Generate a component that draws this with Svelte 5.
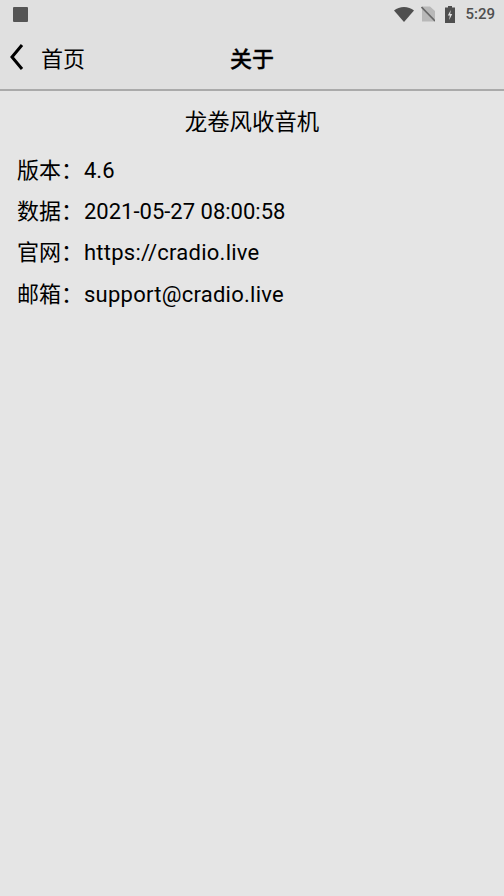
<script>
  const rows = [
    { label: '版本：', value: '4.6' },
    { label: '数据：', value: '2021-05-27 08:00:58' },
    { label: '官网：', value: 'https://cradio.live', wide: true },
    { label: '邮箱：', value: 'support@cradio.live', wide: true }
  ];
</script>

<div class="page" lang="zh-CN">
  <div class="status">
    <div class="notif"></div>
    <div class="right">
      <svg class="wifi" width="20" height="15" viewBox="0 0 20 15"><path d="M0 3.500C2.800 1.200 6.200 0 10 0s7.200 1.200 10 3.500L10 15z" fill="#4f4f4f"/></svg>
      <svg class="sim" width="14" height="16" viewBox="0 0 14 16"><path d="M1 0.500h8L14 5v10.500H1z" fill="#b8b8b8"/><path d="M0.500 1L14 15" stroke="#666" stroke-width="1.600"/></svg>
      <svg class="batt" width="10" height="17" viewBox="0 0 10 17"><path d="M3 0h4v1.500h3V17H0V1.500h3z" fill="#4f4f4f"/><path d="M5.800 4L2.800 9.500h2L4.200 14l3-6h-2z" fill="#e0e0e0"/></svg>
      <span class="time">5:29</span>
    </div>
  </div>
  <header class="nav">
    <div class="back">
      <svg width="16" height="28" viewBox="0 0 16 28"><path d="M14 2L4 14l10 12" fill="none" stroke="#000" stroke-width="3"/></svg>
      <span>首页</span>
    </div>
    <div class="title">关于</div>
  </header>
  <main class="content">
    <div class="app-name">龙卷风收音机</div>
    {#each rows as row}
      <div class="row"><span class="label">{row.label}</span><span class:wide={row.wide}>{row.value}</span></div>
    {/each}
  </main>
</div>

<style>
  :global(body) { margin: 0; background: #e5e5e5; }
  .page {
    width: 504px; height: 896px; overflow: hidden; background: #e5e5e5; color: #000;
    font-family: Roboto, "Noto Sans CJK SC", sans-serif;
  }
  .status {
    height: 28px; display: flex; justify-content: space-between; align-items: center;
    padding: 0 9px 0 13px; background: #e0e0e0;
  }
  .notif { width: 15px; height: 15px; background: #555; border-radius: 1px; }
  .right { display: flex; align-items: center; }
  .wifi { margin-right: 7px; }
  .sim { margin-right: 10px; }
  .batt { margin-right: 10px; }
  .time { font-size: 15px; color: #4f4f4f; font-weight: 500; }
  .nav {
    height: 63px; box-sizing: border-box; display: flex; align-items: center; justify-content: center;
    position: relative; background: #e0e0e0; border-bottom: 2px solid #aaa; padding-bottom: 4px;
  }
  .back {
    position: absolute; left: 8px; top: 0; bottom: 3px; display: flex; align-items: center; gap: 17px;
    font-size: 22px;
  }
  .back span { margin-bottom: 1px; }
  .title { font-size: 22px; font-weight: 500; -webkit-text-stroke: 0.300px #000; }
  .content { padding: 11px 17px 0; font-size: 22px; }
  .app-name { text-align: center; height: 47.700px; line-height: 40px; font-size: 22.400px; }
  .row { height: 41.300px; line-height: 41.300px; display: flex; white-space: nowrap; }
  .label { width: 67px; flex: none; }
  .wide { letter-spacing: 0.250px; }
</style>
